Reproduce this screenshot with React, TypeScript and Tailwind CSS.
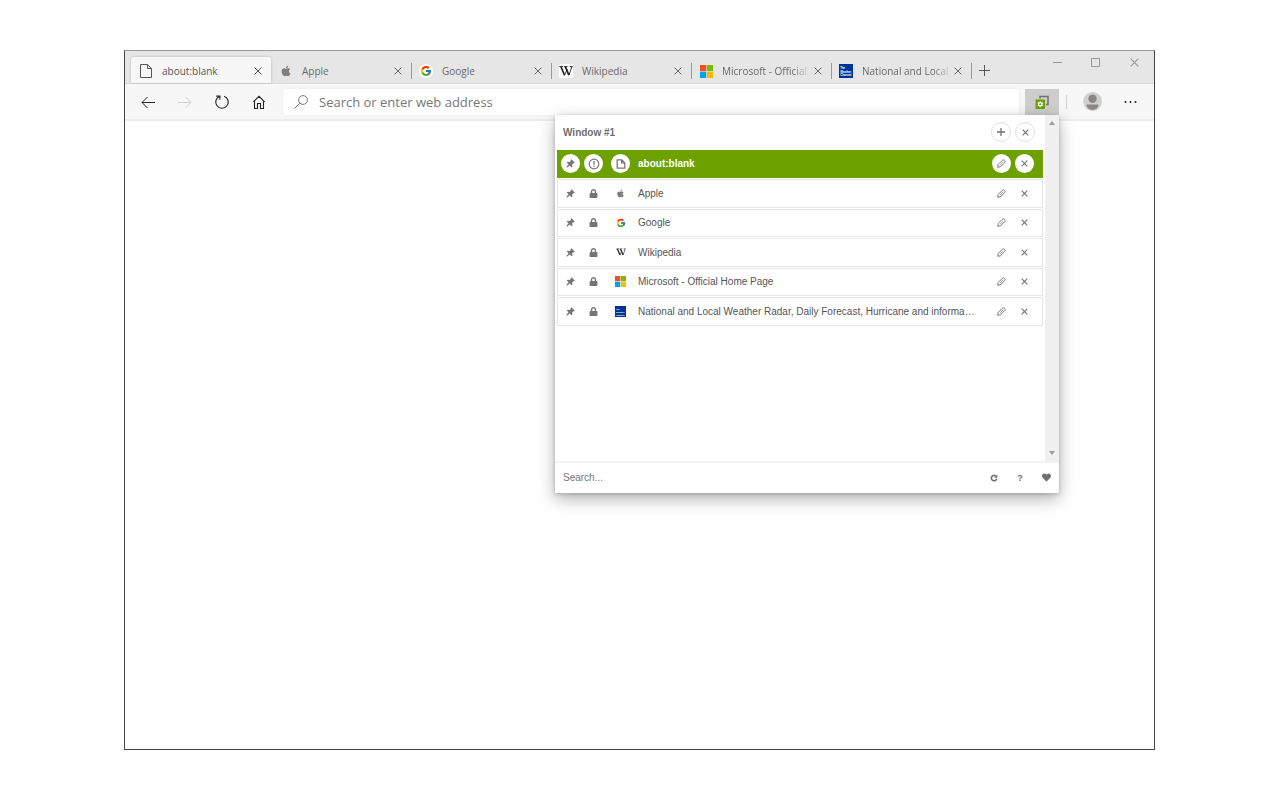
import type { ReactNode } from 'react';
import { FaApple, FaHeart, FaLock } from 'react-icons/fa';
import { FcGoogle } from 'react-icons/fc';

type IconProps = { className?: string };

function PageIcon({ className }: IconProps) {
  return (
    <svg viewBox="0 0 12 14" className={className} fill="none" stroke="currentColor" aria-hidden="true">
      <path d="M.5.5h7l4 4v9H.5zM7.5.5v4h4" />
    </svg>
  );
}

function WikipediaIcon({ className }: IconProps) {
  return (
    <svg viewBox="0 0 14 14" className={className} aria-hidden="true">
      <rect width="14" height="14" rx="2" fill="#fff" />
      <g fill="none" stroke="#222">
        <path strokeWidth="1.7" d="M2 2.700l3.500 8.500M6.300 2.700l3.600 8.500" />
        <path strokeWidth=".9" d="M5.500 11.200L8.200 5.200M9.900 11.200l3-8.500M.3 2.600h3.900M5 2.600h3.600M10.600 2.600h3.200" />
      </g>
    </svg>
  );
}

function MicrosoftIcon({ className }: IconProps) {
  return (
    <svg viewBox="0 0 13 13" className={className} aria-hidden="true">
      <path fill="#f25022" d="M0 0h6.2v6.2H0z" />
      <path fill="#7fba00" d="M6.8 0H13v6.2H6.8z" />
      <path fill="#00a4ef" d="M0 6.8h6.2V13H0z" />
      <path fill="#ffb900" d="M6.8 6.8H13V13H6.8z" />
    </svg>
  );
}

function WeatherIcon({ className }: IconProps) {
  return (
    <svg viewBox="0 0 14 14" className={className} aria-hidden="true">
      <rect width="14" height="14" fill="#003399" />
      <g fill="#fff" fontSize="2.8" fontWeight="bold" fontFamily="'Liberation Sans', sans-serif">
        <text x="1.2" y="5.2">The</text>
        <text x="1.2" y="8.8">Weather</text>
        <text x="1.2" y="12.4">Channel</text>
      </g>
    </svg>
  );
}

function Cross({ className }: IconProps) {
  return (
    <svg viewBox="0 0 8 8" className={className} fill="none" stroke="currentColor" aria-hidden="true">
      <path d="M.6.6l6.8 6.8M7.4.6L.6 7.4" />
    </svg>
  );
}

function BoldCross({ className }: IconProps) {
  return (
    <svg viewBox="0 0 8 8" className={className} fill="none" stroke="currentColor" strokeWidth="1.300" aria-hidden="true">
      <path d="M.8.8l6.400 6.400M7.200.8L.8 7.200" />
    </svg>
  );
}

function Pin({ className }: IconProps) {
  return (
    <svg viewBox="0 0 10 10" className={className} fill="currentColor" aria-hidden="true">
      <path d="M6.100.4 9.700 3.900 8.700 5 8 4.800 6.800 6.100 7.200 8.400 6.200 9.300 4.100 7.300 1 9.600.4 9 2.800 5.900.8 3.900 1.800 3 4.100 3.300 5.300 2.100 5.100 1.300z" />
    </svg>
  );
}

function Pencil({ className }: IconProps) {
  return (
    <svg viewBox="0 0 10 10" className={className} fill="none" stroke="currentColor" strokeLinejoin="round" aria-hidden="true">
      <path strokeWidth="1.100" d="M.8 9.200l.4-3L6 1.400c1.500-1.500 4 1 2.600 2.500L3.800 8.700z" />
      <path strokeWidth=".7" d="M6.800 3.200L3.200 6.800" />
    </svg>
  );
}

type Site = {
  tab: string;
  title: string;
  clipped?: boolean;
  large: ReactNode;
  small: ReactNode;
};

const sites: Site[] = [
  {
    tab: 'about:blank',
    title: 'about:blank',
    large: <PageIcon className="h-[14px] w-3 text-[#555]" />,
    small: (
      <svg viewBox="0 0 10 10" className="size-[10px]" fill="none" stroke="currentColor" strokeWidth="1.3" strokeLinejoin="round" aria-hidden="true">
        <path d="M1.200.8h4.400l3.200 3.100v5.300H1.200zM5.600.8v3.100h3.200" />
      </svg>
    ),
  },
  {
    tab: 'Apple',
    title: 'Apple',
    large: <FaApple className="size-3 text-[#808080]" />,
    small: <FaApple className="size-[9px] text-[#808080]" />,
  },
  {
    tab: 'Google',
    title: 'Google',
    large: (
      <span className="grid size-[14px] place-items-center rounded-full bg-white">
        <FcGoogle className="size-3" />
      </span>
    ),
    small: <FcGoogle className="size-[10px]" />,
  },
  {
    tab: 'Wikipedia',
    title: 'Wikipedia',
    large: <WikipediaIcon className="size-[14px]" />,
    small: <WikipediaIcon className="size-[10px]" />,
  },
  {
    tab: 'Microsoft - Official',
    title: 'Microsoft - Official Home Page',
    clipped: true,
    large: <MicrosoftIcon className="size-[13px]" />,
    small: <MicrosoftIcon className="size-[11px]" />,
  },
  {
    tab: 'National and Local',
    title: 'National and Local Weather Radar, Daily Forecast, Hurricane and informa…',
    clipped: true,
    large: <WeatherIcon className="size-[14px]" />,
    small: <WeatherIcon className="size-[11px]" />,
  },
];

function BrowserTab({ site, active, divider }: { site: Site; active: boolean; divider: boolean }) {
  return (
    <div
      className={
        active
          ? 'flex h-[26px] w-[140px] shrink-0 items-center rounded-t-[3px] bg-[#f7f7f7] pt-[2px] text-[#555] shadow-[0_0_3px_rgba(0,0,0,0.2)]'
          : 'flex h-[26px] w-[140px] shrink-0 items-center pt-[2px] text-[#6a6a6a]'
      }
    >
      <button type="button" className="flex min-w-0 flex-1 items-center pl-[7px] text-left">
        <span className="grid w-4 shrink-0 place-items-center">{site.large}</span>
        <span
          className={
            site.clipped
              ? 'ml-2 text-[10px] leading-4 whitespace-nowrap [mask-image:linear-gradient(to_right,black_82%,rgba(0,0,0,0.2)_100%)]'
              : 'ml-2 text-[10px] leading-4 whitespace-nowrap'
          }
        >
          {site.tab}
        </span>
      </button>
      <button type="button" aria-label={`Close ${site.tab}`} className="grid w-3 shrink-0 place-items-center">
        <Cross className="size-2" />
      </button>
      <span className={divider ? '-mr-px ml-[7px] h-4 w-px bg-[#9a9a9a]' : '-mr-px ml-[7px] h-4 w-px'} />
    </div>
  );
}

function RowButton({ label, active, className, children }: { label: string; active: boolean; className: string; children: ReactNode }) {
  return (
    <button type="button" aria-label={label} className={className}>
      <span className={active ? 'grid size-[19px] place-items-center rounded-full bg-white' : 'grid size-[19px] place-items-center'}>
        {children}
      </span>
    </button>
  );
}

function TabRow({ site, active }: { site: Site; active: boolean }) {
  return (
    <li
      className={
        active
          ? 'flex items-center bg-[#6ca100] pr-[9px] pl-1 text-[#757575]'
          : 'flex items-center border border-[#e6e6e6] bg-white pr-2 pl-[3px] text-[#757575]'
      }
    >
      <RowButton label="Pin tab" active={active} className="mr-1">
        <Pin className="size-[9px]" />
      </RowButton>
      <RowButton label="Protect tab" active={active} className="mr-2">
        {active ? (
          <svg viewBox="0 0 12 12" className="size-3" fill="none" stroke="currentColor" aria-hidden="true">
            <circle cx="6" cy="6" r="4.8" strokeWidth="1.2" />
            <path d="M6 3v3.8M6 7.7V9" strokeWidth="1.3" />
          </svg>
        ) : (
          <FaLock className="size-[9px]" />
        )}
      </RowButton>
      <span className={active ? 'grid size-[19px] shrink-0 place-items-center rounded-full bg-white' : 'grid size-[19px] shrink-0 place-items-center'}>
        {site.small}
      </span>
      <a
        href="#"
        className={
          active
            ? 'ml-2 min-w-0 flex-1 truncate pt-px text-[10px] leading-4 font-bold text-white'
            : 'ml-2 min-w-0 flex-1 truncate pt-px text-[10px] leading-4 text-[#555]'
        }
      >
        {site.title}
      </a>
      <RowButton label="Rename tab" active={active} className="ml-3">
        <Pencil className="size-[9px]" />
      </RowButton>
      <RowButton label="Close tab" active={active} className="ml-1">
        <BoldCross className="size-[7px]" />
      </RowButton>
    </li>
  );
}

function TabsPopup() {
  return (
    <section
      aria-label="Open tabs"
      className="absolute top-full right-0 z-10 w-[504px] bg-white font-['Liberation_Sans',Arial,sans-serif] text-[#707070] shadow-[0_6px_16px_rgba(0,0,0,0.3),0_1px_4px_rgba(0,0,0,0.2)]"
    >
      <div className="flex h-[346px]">
        <div className="min-w-0 flex-1 px-[2px]">
          <header className="flex h-[35px] items-center gap-1 pr-2 pl-[6px]">
            <h1 className="flex-1 pt-px text-[10px] leading-4 font-bold">Window #1</h1>
            <button type="button" aria-label="New tab" className="grid size-5 place-items-center rounded-full border border-[#e2e2e2]">
              <svg viewBox="0 0 8 8" className="size-2" stroke="currentColor" strokeWidth="1.3" aria-hidden="true">
                <path d="M4 0v8M0 4h8" />
              </svg>
            </button>
            <button type="button" aria-label="Close window" className="grid size-5 place-items-center rounded-full border border-[#e2e2e2]">
              <BoldCross className="size-[7px]" />
            </button>
          </header>
          <ul className="grid h-[176px] auto-rows-fr grid-cols-1 gap-px">
            {sites.map((site, i) => (
              <TabRow key={site.title} site={site} active={i === 0} />
            ))}
          </ul>
        </div>
        <div className="flex w-[14px] flex-col items-center justify-between bg-[#f0f0f0] py-[6px] text-[#9a9a9a]" aria-hidden="true">
          <svg viewBox="0 0 6 4" className="h-1 w-[6px]" fill="currentColor">
            <path d="M3 0l3 4H0z" />
          </svg>
          <svg viewBox="0 0 6 4" className="h-1 w-[6px]" fill="currentColor">
            <path d="M3 4L0 0h6z" />
          </svg>
        </div>
      </div>
      <footer className="flex h-8 items-center border-t-2 border-[#f3f3f3] pl-2">
        <input
          type="text"
          aria-label="Search tabs"
          placeholder="Search..."
          className="min-w-0 flex-1 bg-transparent text-[10px] leading-4 text-[#555] outline-none placeholder:text-[#757575]"
        />
        <button type="button" aria-label="Reload" className="grid w-[26px] place-items-center">
          <svg viewBox="0 0 8 8" className="size-2" fill="none" stroke="currentColor" aria-hidden="true">
            <path d="M6.700 4.800a2.700 2.700 0 1 1-1-2.900" strokeWidth="1.600" />
            <path d="M7.300.5v3.200H4.100z" fill="currentColor" stroke="none" />
          </svg>
        </button>
        <button type="button" aria-label="Help" className="w-[26px] text-center text-[9px] leading-4 font-bold">
          ?
        </button>
        <button type="button" aria-label="Donate" className="grid w-[26px] place-items-center">
          <FaHeart className="size-[9px]" />
        </button>
      </footer>
    </section>
  );
}

const navButton = 'grid w-[37px] place-items-center';

export default function App() {
  return (
    <div className="flex min-h-screen bg-white py-[50px] pr-[125px] pl-[124px] font-['Open_Sans','Noto_Sans',sans-serif]">
      <div className="flex min-w-0 flex-1 flex-col border border-[#444] border-t-[#999] bg-white">
        <div className="flex h-[33px] items-end border-b border-[#dadada] bg-[#e6e6e6] pl-[6px]">
          {sites.map((site, i) => (
            <BrowserTab key={site.tab} site={site} active={i === 0} divider={i > 0} />
          ))}
          <button type="button" aria-label="New tab" className="ml-2 grid h-[26px] w-[11px] place-items-center text-[#555]">
            <svg viewBox="0 0 11 11" className="size-[11px]" stroke="currentColor" aria-hidden="true">
              <path d="M5.500 0v11M0 5.500h11" />
            </svg>
          </button>
          <div className="ml-auto flex self-start pt-[7px] text-[#999]">
            <button type="button" aria-label="Minimize" className="grid w-[38px] place-items-center">
              <svg viewBox="0 0 9 9" className="size-[9px]" stroke="currentColor" aria-hidden="true">
                <path d="M0 4.500h9" />
              </svg>
            </button>
            <button type="button" aria-label="Maximize" className="grid w-[39px] place-items-center">
              <svg viewBox="0 0 9 9" className="size-[9px]" fill="none" stroke="currentColor" aria-hidden="true">
                <path d="M.5.5h8v8h-8z" />
              </svg>
            </button>
            <button type="button" aria-label="Close" className="grid w-[39px] place-items-center">
              <Cross className="size-[9px]" />
            </button>
          </div>
        </div>

        <div className="flex h-[37px] items-center border-b-2 border-[#ececec] bg-[#f7f7f7] pr-1 pl-1 text-[#222]">
          <button type="button" aria-label="Back" className={navButton}>
            <svg viewBox="0 0 14 12" className="h-3 w-[14px]" fill="none" stroke="currentColor" aria-hidden="true">
              <path d="M14 6.500H1M6.500 1L1 6.500 6.500 12" />
            </svg>
          </button>
          <button type="button" aria-label="Forward" className="grid w-[37px] place-items-center text-[#d0d0d0]">
            <svg viewBox="0 0 14 12" className="h-3 w-[14px]" fill="none" stroke="currentColor" aria-hidden="true">
              <path d="M0 6.500h13M7.500 1L13 6.500 7.500 12" />
            </svg>
          </button>
          <button type="button" aria-label="Refresh" className={navButton}>
            <svg viewBox="0 0 14 14" className="size-[14px]" fill="none" stroke="currentColor" strokeWidth="1.100" aria-hidden="true">
              <path d="M9.200 1.200A6.200 6.200 0 1 1 4.800 1.200M1.200 1.100h3.700v3.700" />
            </svg>
          </button>
          <button type="button" aria-label="Home" className={navButton}>
            <svg viewBox="0 0 12 14" className="h-[14px] w-3" fill="none" stroke="currentColor" strokeWidth="1.100" aria-hidden="true">
              <path d="M.400 6.800L6 1.300l5.600 5.500M1.500 5.800v7.700h3V8.500h3v5h3V5.800" />
            </svg>
          </button>
          <label className="ml-[6px] flex h-[26px] min-w-0 flex-1 items-center rounded-[3px] bg-white pl-[11px] shadow-[0_0_3px_rgba(0,0,0,0.06)]">
            <svg viewBox="0 0 14 14" className="size-[14px] text-[#777]" fill="none" stroke="currentColor" aria-hidden="true">
              <circle cx="9" cy="5" r="4.400" />
              <path d="M5.800 8.200L.6 13.400" />
            </svg>
            <input
              type="text"
              aria-label="Address"
              placeholder="Search or enter web address"
              className="ml-[11px] min-w-0 flex-1 bg-transparent text-[13px] leading-5 outline-none placeholder:text-[#777]"
            />
          </label>
          <div className="relative ml-[6px]">
            <button type="button" aria-label="Tab manager" className="grid h-[26px] w-[34px] place-items-center bg-[#cdcdcd]">
              <svg viewBox="0 0 14 14" className="size-[14px]" aria-hidden="true">
                <path d="M5 3.500V1.500h8v8h-2" fill="none" stroke="#707070" strokeWidth="1.500" />
                <path fill="#6ca100" d="M.5 4.500h9.500V14H.5z" />
                <circle cx="5.250" cy="9.250" r="1.700" fill="none" stroke="#fff" strokeWidth="1.300" />
                <path d="M5.250 6.300v1M5.250 11.200v1M2.700 7.800l.9.500M6.900 10.200l.9.500M2.700 10.700l.9-.5M6.900 8.300l.9-.5" stroke="#fff" strokeWidth="1.100" />
              </svg>
            </button>
            <TabsPopup />
          </div>
          <span className="ml-[7px] h-[14px] w-px bg-[#d5d5d5]" />
          <button type="button" aria-label="Profile" className="ml-[6px] grid w-[38px] place-items-center">
            <svg viewBox="0 0 19 19" className="size-[19px]" aria-hidden="true">
              <circle cx="9.500" cy="9.500" r="9.500" fill="#d2d0ce" />
              <circle cx="9.500" cy="6.800" r="4.200" fill="#8a8785" />
              <path d="M3.500 12.600h12c0 3.500-3 5.400-6 5.400s-6-1.900-6-5.400z" fill="#8a8785" />
            </svg>
          </button>
          <button type="button" aria-label="Settings and more" className="grid w-[39px] place-items-center">
            <svg viewBox="0 0 13 2" className="h-[2px] w-[13px]" fill="currentColor" aria-hidden="true">
              <circle cx="1.500" cy="1" r="1" />
              <circle cx="6.500" cy="1" r="1" />
              <circle cx="11.500" cy="1" r="1" />
            </svg>
          </button>
        </div>
        <main className="flex-1 bg-white" />
      </div>
    </div>
  );
}
